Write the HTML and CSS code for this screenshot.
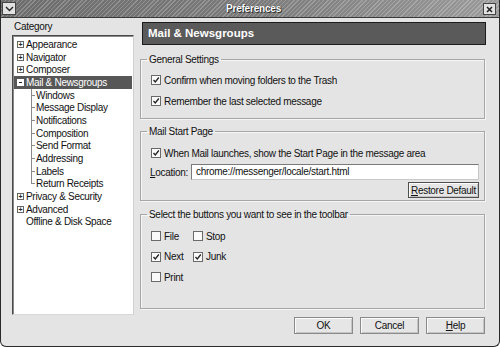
FILE: index.html
```html
<!DOCTYPE html>
<html lang="en">
<head>
    <meta charset="UTF-8">
    <title>Preferences</title>
    <link rel="stylesheet" href="styles.css">
</head>
<body>
    <div class="window">
        <div class="titlebar">
            <span class="tb-btn menu-btn">
                <svg width="9" height="6" viewBox="0 0 9 6"><path d="M1 1 L4.5 4.5 L8 1" fill="none" stroke="#222" stroke-width="1.4"/></svg>
            </span>
            <span class="title">Preferences</span>
            <span class="tb-btn close-btn">
                <svg width="7" height="7" viewBox="0 0 7 7"><path d="M1 1 L6 6 M6 1 L1 6" fill="none" stroke="#222" stroke-width="1.6"/></svg>
            </span>
        </div>

        <div class="content">
            <div class="sidebar">
                <div class="cat-label">Category</div>
                <ul class="tree">
                    <li class="row"><span class="exp">+</span>Appearance</li>
                    <li class="row"><span class="exp">+</span>Navigator</li>
                    <li class="row"><span class="exp">+</span>Composer</li>
                    <li class="row selected"><span class="exp minus"></span>Mail &amp; Newsgroups</li>
                    <li class="row child"><span class="branch"></span>Windows</li>
                    <li class="row child"><span class="branch"></span>Message Display</li>
                    <li class="row child"><span class="branch"></span>Notifications</li>
                    <li class="row child"><span class="branch"></span>Composition</li>
                    <li class="row child"><span class="branch"></span>Send Format</li>
                    <li class="row child"><span class="branch"></span>Addressing</li>
                    <li class="row child"><span class="branch"></span>Labels</li>
                    <li class="row child last"><span class="branch"></span>Return Receipts</li>
                    <li class="row"><span class="exp">+</span>Privacy &amp; Security</li>
                    <li class="row"><span class="exp">+</span>Advanced</li>
                    <li class="row leaf">Offline &amp; Disk Space</li>
                </ul>
            </div>

            <div class="panel">
                <div class="panel-header">Mail &amp; Newsgroups</div>

                <fieldset class="group general">
                    <legend>General Settings</legend>
                    <label class="check"><span class="box on"></span>Confirm when moving folders to the Trash</label>
                    <label class="check"><span class="box on"></span>Remember the last selected message</label>
                </fieldset>

                <fieldset class="group start-page">
                    <legend>Mail Start Page</legend>
                    <label class="check"><span class="box on"></span>When Mail launches, show the Start Page in the message area</label>
                    <div class="location-row">
                        <span class="loc-label"><u>L</u>ocation:</span>
                        <div class="textbox">chrome://messenger/locale/start.html</div>
                    </div>
                    <div class="restore-row">
                        <button class="btn restore"><u>R</u>estore Default</button>
                    </div>
                </fieldset>

                <fieldset class="group toolbar-btns">
                    <legend>Select the buttons you want to see in the toolbar</legend>
                    <div class="check-grid">
                        <label class="check"><span class="box"></span>File</label>
                        <label class="check"><span class="box"></span>Stop</label>
                        <label class="check"><span class="box on"></span>Next</label>
                        <label class="check"><span class="box on"></span>Junk</label>
                        <label class="check"><span class="box"></span>Print</label>
                    </div>
                </fieldset>

                <div class="footer">
                    <button class="btn">OK</button>
                    <button class="btn">Cancel</button>
                    <button class="btn"><u>H</u>elp</button>
                </div>
            </div>
        </div>
    </div>
</body>
</html>
```

FILE: styles.css
```css
* {
    box-sizing: border-box;
}
body {
    margin: 0;
    font-family: "Liberation Sans", Arial, sans-serif;
    font-size: 10px;
    letter-spacing: -0.3px;
    color: #111;
    background: #fff;
}
.window {
    width: 500px;
    height: 347px;
    background: #e4e4e4;
    border: 1px solid #2a2a2a;
    border-top: none;
    border-radius: 0 0 6px 6px;
    overflow: hidden;
}

/* title bar */
.titlebar {
    height: 18px;
    display: flex;
    align-items: center;
    padding: 0 3px 0 1px;
    background:
        repeating-linear-gradient(135deg, rgba(255,255,255,0.22) 0 1px, rgba(0,0,0,0) 1px 3px),
        linear-gradient(to right, #6c6c6c, #7a7a7a 50%, #9a9a9a);
    border-bottom: 1px solid #3a3a3a;
}
.title {
    flex: 1;
    text-align: center;
    font-weight: bold;
    color: #fff;
    letter-spacing: -0.2px;
    text-shadow: 0 0 1px #222, 1px 1px 0 #333;
    padding-left: 8px;
}
.tb-btn {
    display: flex;
    align-items: center;
    justify-content: center;
    background: #e2e2e2;
    border: 1px solid #444;
}
.menu-btn {
    width: 14px;
    height: 13px;
}
.close-btn {
    width: 13px;
    height: 12px;
    margin-top: 1px;
}

/* main area */
.content {
    display: flex;
    gap: 6px;
    padding: 2px 13px 0 11px;
}
.sidebar {
    width: 122px;
}
.cat-label {
    line-height: 13px;
    padding-left: 2px;
    margin-bottom: 2px;
}
.tree {
    list-style: none;
    margin: 0;
    padding: 2px 0 0 0;
    height: 280px;
    background: #fff;
    border: 1px solid;
    border-color: #4a4a4a #d0d0d0 #d8d8d8 #4a4a4a;
    box-shadow: inset 1px 1px 0 #8a8a8a;
}
.row {
    display: flex;
    align-items: center;
    height: 12.7px;
    padding-left: 3px;
    margin-left: 1px;
    white-space: nowrap;
}
.exp {
    width: 7px;
    height: 7px;
    margin-right: 2px;
    border: 1px solid #666;
    font-size: 7px;
    line-height: 5px;
    text-align: center;
    letter-spacing: 0;
    color: #222;
    font-weight: bold;
}
.exp.minus {
    background: linear-gradient(#222, #222) center / 3px 1px no-repeat, #fff;
    border-color: #fff;
}
.selected {
    background: #575757;
    color: #fff;
    margin-right: 1px;
}
.child {
    padding-left: 17px;
}
.branch {
    width: 4px;
    height: 100%;
    margin-right: 1px;
    background:
        linear-gradient(#8a8a8a, #8a8a8a) left top / 1px 100% no-repeat,
        linear-gradient(#8a8a8a, #8a8a8a) left 50% / 100% 1px no-repeat;
}
.child.last .branch {
    background:
        linear-gradient(#8a8a8a, #8a8a8a) left top / 1px 50% no-repeat,
        linear-gradient(#8a8a8a, #8a8a8a) left 50% / 100% 1px no-repeat;
}
.leaf {
    padding-left: 12px;
}

/* right panel */
.panel {
    width: 346px;
    display: flex;
    flex-direction: column;
}
.panel-header {
    margin: 2px 0 8px 2px;
    height: 23px;
    line-height: 21px;
    padding-left: 5px;
    background: #5a5a5a;
    border: 1px solid #1c1c1c;
    color: #fff;
    font-size: 11.5px;
    font-weight: bold;
    letter-spacing: 0;
}
.group {
    margin: 0 1px 0 0;
    padding: 0 5px 0 10px;
    border: 1px solid #a6a6a6;
    box-shadow: inset 1px 1px 0 #f6f6f6, 1px 1px 0 #f6f6f6;
    min-width: 0;
}
.group legend {
    padding: 0 2px;
    margin-left: -4px;
    line-height: 13px;
}
.general {
    padding-top: 6px;
    padding-bottom: 9px;
}
.general .check + .check {
    margin-top: 5px;
}
.start-page {
    margin-top: 6px;
    padding-top: 7px;
    padding-bottom: 2px;
}
.toolbar-btns {
    margin-top: 7px;
    padding-top: 7px;
    padding-bottom: 23px;
}
.check {
    display: flex;
    align-items: center;
    height: 16px;
    white-space: nowrap;
}
.box {
    width: 10px;
    height: 10px;
    margin-right: 3px;
    border: 1px solid #6a6a6a;
    background: #fafafa;
    flex: none;
}
.box.on {
    background: #fafafa url("data:image/svg+xml,%3Csvg xmlns='http://www.w3.org/2000/svg' width='8' height='8' viewBox='0 0 8 8'%3E%3Cpath d='M1.5 4 L3.3 6 L6.8 1.5' fill='none' stroke='%23222' stroke-width='1.3'/%3E%3C/svg%3E") center no-repeat;
}
.location-row {
    display: flex;
    align-items: center;
    margin-top: 3px;
}
.loc-label {
    width: 41px;
    padding-left: 0;
    margin-left: -1px;
}
.textbox {
    flex: 1;
    height: 16px;
    line-height: 14px;
    padding-left: 4px;
    background: #fff;
    border: 1px solid;
    border-color: #7a7a7a #c8c8c8 #c8c8c8 #7a7a7a;
    white-space: nowrap;
    overflow: hidden;
}
.restore-row {
    display: flex;
    justify-content: flex-end;
    margin-top: 2px;
}
.btn {
    font-family: inherit;
    font-size: 10px;
    letter-spacing: -0.3px;
    color: #111;
    height: 17px;
    padding: 0;
    background: #e6e6e6;
    border: 1px solid #8a8a8a;
    box-shadow: inset 1px 1px 0 #fbfbfb, inset -1px -1px 0 #c4c4c4;
}
.restore {
    width: 71px;
    height: 16px;
    border-color: #505050;
}
.check-grid {
    display: grid;
    grid-template-columns: 42px auto;
    row-gap: 4.5px;
    justify-content: start;
}
.footer {
    display: flex;
    justify-content: flex-end;
    gap: 7px;
    margin-top: 8px;
    padding-right: 1px;
}
.footer .btn {
    width: 59px;
}
```
